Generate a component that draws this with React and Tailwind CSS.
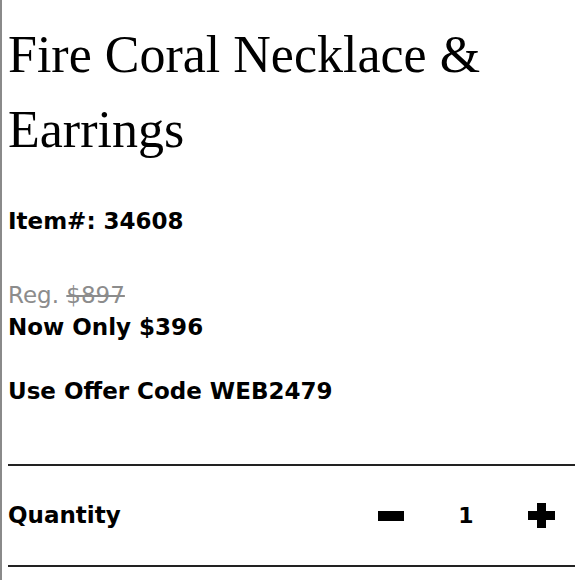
import React from "react";

export default function App() {
  return (
    <div className="w-[580px] h-[580px] bg-white border-l-2 border-[#8a8a8a] pl-[6px] pr-[5px] overflow-hidden">
      <h1 className="font-['Liberation_Serif',serif] text-[52px] leading-[75px] text-black pt-[17px] font-normal">
        Fire Coral Necklace &amp; Earrings
      </h1>
      <div className="font-['DejaVu_Sans',sans-serif] font-bold text-black">
        <p className="text-[23px] leading-[32px] mt-[38px]">Item#: 34608</p>
        <p className="text-[23px] leading-[32px] mt-[42px] font-normal text-[#8c8c8c]">
          Reg. <span className="line-through">$897</span>
        </p>
        <p className="text-[23px] leading-[32px]">Now Only $396</p>
        <p className="text-[23px] leading-[32px] mt-[32px]">Use Offer Code WEB2479</p>
      </div>
      <div className="mt-[57px] border-t-2 border-[#222] border-b-2 h-[103px] flex items-center font-['DejaVu_Sans',sans-serif] font-bold">
        <span className="text-[23px]">Quantity</span>
        <div className="ml-auto flex items-center">
          <span className="block w-[26px] h-[10px] bg-black"></span>
          <span className="text-[22px] w-[36px] ml-[44px] text-center">1</span>
          <span className="relative block w-[27px] h-[25px] ml-[44px] mr-[20px]">
            <span className="absolute left-0 top-[8px] w-[27px] h-[9px] bg-black"></span>
            <span className="absolute left-[9px] top-0 w-[9px] h-[25px] bg-black"></span>
          </span>
        </div>
      </div>
    </div>
  );
}
